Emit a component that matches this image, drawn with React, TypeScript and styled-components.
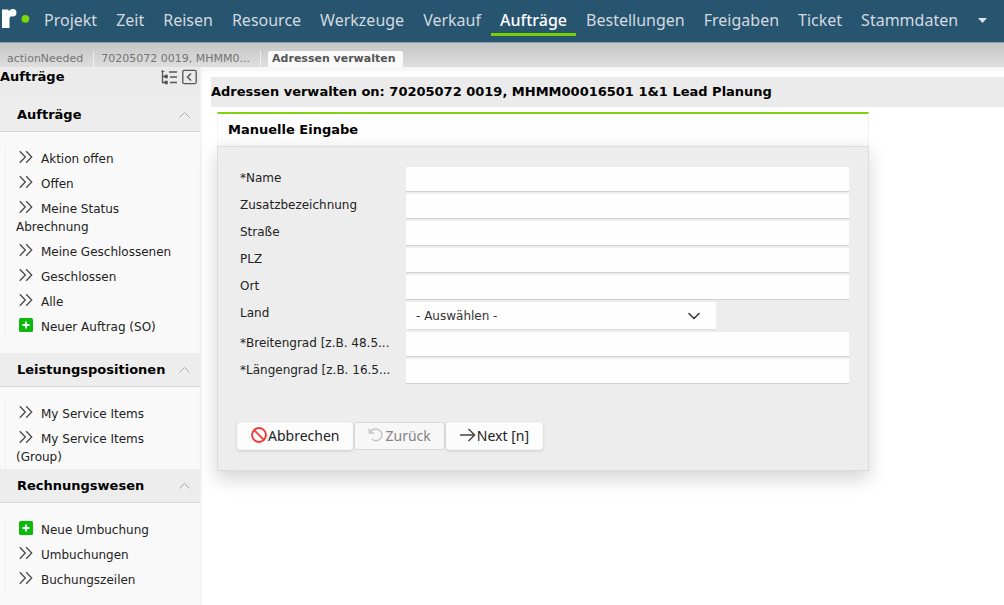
import React from "react";
import styled, { createGlobalStyle, css } from "styled-components";

const uiFont = `"DejaVu Sans", Verdana, sans-serif`;
const navFont = `"Noto Sans", "Open Sans", sans-serif`;

const GlobalStyle = createGlobalStyle`
  * { box-sizing: border-box; }
  body {
    margin: 0;
    background: #fff;
    color: #222;
    font: 12px/18px ${uiFont};
  }
`;

const Page = styled.div`
  display: flex;
  flex-direction: column;
  min-height: 100vh;
`;

const Header = styled.header`
  display: flex;
  align-items: flex-start;
  height: 43px;
  background: #27546f;
  border-bottom: 1px solid #8d9fab;
`;

const Logo = styled.a`
  display: block;
  width: 35px;
  height: 42px;
  flex: none;
`;

const Nav = styled.nav`
  display: flex;
  gap: 1px;
`;

const NavLink = styled.a<{ $active?: boolean }>`
  height: 36px;
  padding: 8px 9px 0;
  font: 16px/24px ${navFont};
  color: #d3dae0;
  text-decoration: none;
  white-space: nowrap;
  ${(p) =>
    p.$active &&
    css`
      color: #fff;
      font-weight: 500;
      border-bottom: 3px solid #7bd000;
    `}
`;

const MoreButton = styled.button`
  display: flex;
  align-items: center;
  height: 40px;
  padding: 0 9px 0 11px;
  border: 0;
  background: none;
`;

const TabBar = styled.nav`
  display: flex;
  align-items: flex-end;
  height: 24px;
  background: linear-gradient(#c6c6c6, #dedede);
`;

const Tab = styled.a<{ $active?: boolean }>`
  height: 16px;
  padding: 0 10px 0 7px;
  font: 11px/16px ${uiFont};
  color: #747474;
  text-decoration: none;
  white-space: nowrap;
  border-right: 1px solid #efefef;
  ${(p) =>
    p.$active &&
    css`
      margin-left: 7px;
      padding: 0 7px 0 4px;
      border: 0;
      border-radius: 2px 2px 0 0;
      background: #fafafa;
      color: #555;
      font-weight: bold;
    `}
`;

const Columns = styled.div`
  display: flex;
  flex: 1;
`;

const Sidebar = styled.aside`
  flex: none;
  width: 202px;
  background: #f9f9f9;
  border-right: 2px solid #f3f3f3;
`;

const SidebarTop = styled.div`
  display: flex;
  align-items: flex-start;
  height: 31px;
  padding: 1px 3px 0 0;
  background: #ebebeb;
`;

const SidebarTitle = styled.h1`
  flex: 1;
  margin: 0;
  font: bold 13px/18px ${uiFont};
  color: #000;
`;

const IconButton = styled.button`
  display: flex;
  padding: 1px 0 0;
  margin-left: 4px;
  border: 0;
  background: none;
`;

const SectionToggle = styled.button`
  display: flex;
  align-items: center;
  justify-content: space-between;
  width: 100%;
  height: 34px;
  padding: 1px 10px 0 17px;
  border: 0;
  border-bottom: 1px solid #d6d6d6;
  background: #ededed;
  font: bold 13px/18px ${uiFont};
  color: #000;
`;

const LinkList = styled.ul<{ $tight?: boolean }>`
  margin: 14px 0 ${(p) => (p.$tight ? 0 : 14)}px 5px;
  padding: 0 15px 0 10px;
  list-style: none;
  border-left: 1px solid #efefef;
`;

const LinkItem = styled.li`
  padding: 4px 0 3px;
`;

const SideLink = styled.a`
  color: #222;
  text-decoration: none;

  svg {
    width: 16px;
    height: 16px;
    margin: -4px 7px -4px 2px;
    vertical-align: 2px;
  }
`;

const Main = styled.main`
  flex: 1;
  min-width: 0;
  padding: 10px 0 30px 9px;
  background: linear-gradient(#f4f4f4, #fff 8px);
`;

const PageTitle = styled.h2`
  margin: 0;
  background: #ebebeb;
  font: bold 13px/30px ${uiFont};
  color: #000;
`;

const Card = styled.section`
  max-width: 652px;
  margin: 5px 20px 0 6px;
`;

const CardTitle = styled.h3`
  margin: 0;
  padding-left: 10px;
  border: 1px solid #f3f3f3;
  border-top: 2px solid #7fd40f;
  border-bottom: 0;
  background: linear-gradient(#fff 60%, #fafafa);
  font: bold 13px/32px ${uiFont};
  color: #000;
`;

const CardForm = styled.form`
  padding: 20px 19px 20px;
  border: 1px solid #dcdcdc;
  background: #ededed;
  box-shadow: 0 8px 18px rgba(0, 0, 0, 0.17);
`;

const Field = styled.div<{ $tall?: boolean }>`
  display: flex;
  align-items: flex-start;
  height: ${(p) => (p.$tall ? 30 : 27)}px;
  padding-left: 3px;
`;

const Label = styled.label`
  flex: none;
  width: 166px;
  font: 12px/23px ${uiFont};
  color: #222;
  white-space: nowrap;
`;

const TextInput = styled.input`
  flex: 1;
  min-width: 0;
  height: 25px;
  padding: 0 8px;
  border: 0;
  border-bottom: 1px solid #d0d0d0;
  background: #fefefe;
  font: 12px/18px ${uiFont};
`;

const SelectWrap = styled.div`
  display: flex;
  align-items: center;
  width: 310px;
  height: 28px;
  border-bottom: 1px solid #dedede;
  background: #fefefe;

  svg {
    flex: none;
    margin: 0 15px 0 -29px;
    pointer-events: none;
  }
`;

const Select = styled.select`
  flex: 1;
  height: 26px;
  padding: 0 30px 0 10px;
  border: 0;
  background: none;
  appearance: none;
  font: 12px/18px ${uiFont};
  color: #333;
`;

const Actions = styled.div`
  display: flex;
  gap: 1px;
  margin-top: 36px;
`;

const ActionButton = styled.button`
  display: flex;
  align-items: center;
  height: 28px;
  padding: 0 13px;
  border: 1px solid #f6f6f6;
  border-radius: 3px;
  background: #fcfcfc;
  box-shadow: 0 1px 3px rgba(0, 0, 0, 0.15);
  font: 14px/20px ${navFont};
  color: #222;

  svg {
    flex: none;
    width: 16px;
    height: 16px;
    margin: 0 1px 2px 0;
  }

  &:disabled {
    border-color: #d6d6d6;
    background: #f7f7f7;
    color: #848484;
    box-shadow: none;
  }
`;

const Chevrons = () => (
  <svg viewBox="0 0 16 16" fill="none" stroke="#4a4a4a" strokeWidth="1.3" aria-hidden="true">
    <path d="M1.8 2.2l5.5 5.8-5.5 5.8M8.2 2.2l5.5 5.8-5.5 5.8" />
  </svg>
);

const PlusBox = () => (
  <svg viewBox="0 0 16 16" aria-hidden="true">
    <rect x="1" y="1" width="14" height="14" rx="1.5" fill="#0cba0c" />
    <path d="M8 4.5v7M4.5 8h7" stroke="#fff" strokeWidth="1.8" />
  </svg>
);

const Caret = () => (
  <svg width="11" height="6" viewBox="0 0 11 6" fill="none" stroke="#aaa" aria-hidden="true">
    <path d="M.5 5.5l5-5 5 5" />
  </svg>
);

type Entry = { text: string; add?: boolean };

const sections: { title: string; tight?: boolean; entries: Entry[] }[] = [
  {
    title: "Aufträge",
    entries: [
      { text: "Aktion offen" },
      { text: "Offen" },
      { text: "Meine Status Abrechnung" },
      { text: "Meine Geschlossenen" },
      { text: "Geschlossen" },
      { text: "Alle" },
      { text: "Neuer Auftrag (SO)", add: true },
    ],
  },
  {
    title: "Leistungspositionen",
    tight: true,
    entries: [{ text: "My Service Items" }, { text: "My Service Items (Group)" }],
  },
  {
    title: "Rechnungswesen",
    entries: [
      { text: "Neue Umbuchung", add: true },
      { text: "Umbuchungen" },
      { text: "Buchungszeilen" },
    ],
  },
];

const navItems = [
  "Projekt", "Zeit", "Reisen", "Resource", "Werkzeuge", "Verkauf",
  "Aufträge", "Bestellungen", "Freigaben", "Ticket", "Stammdaten",
];

const TextField = ({ id, label }: { id: string; label: string }) => (
  <Field>
    <Label htmlFor={id}>{label}</Label>
    <TextInput id={id} type="text" />
  </Field>
);

export default function App() {
  return (
    <Page>
      <GlobalStyle />
      <Header>
        <Logo href="#" aria-label="Start">
          <svg width="35" height="42" viewBox="0 0 35 42" aria-hidden="true">
            <path d="M2 9.500h6.500v1.500l4-1.500v6.500c-2.200 0-3 1.200-3 3.500v8.500H2z" fill="#fff" />
            <circle cx="12.800" cy="12.700" r="3.700" fill="#fff" />
            <circle cx="25.400" cy="18.800" r="3.900" fill="#7bd800" />
          </svg>
        </Logo>
        <Nav>
          {navItems.map((name) => (
            <NavLink key={name} href="#" $active={name === "Aufträge"}>
              {name}
            </NavLink>
          ))}
        </Nav>
        <MoreButton type="button" aria-label="Mehr">
          <svg width="9" height="5" viewBox="0 0 9 5" aria-hidden="true">
            <path d="M0 0h9L4.500 5z" fill="#dfe5e9" />
          </svg>
        </MoreButton>
      </Header>
      <TabBar>
        <Tab href="#">actionNeeded</Tab>
        <Tab href="#">70205072 0019, MHMM0...</Tab>
        <Tab href="#" $active>Adressen verwalten</Tab>
      </TabBar>
      <Columns>
        <Sidebar>
          <SidebarTop>
            <SidebarTitle>Aufträge</SidebarTitle>
            <IconButton type="button" aria-label="Baumansicht">
              <svg width="18" height="16" viewBox="0 0 18 16" fill="none" stroke="#555" strokeWidth="1.3" aria-hidden="true">
                <path d="M2.500 1v12.500H6M2.500 7.500H6M9 3h8M10 8h7M10 13.500h7" />
                <path d="M1 2.500h4M5 6h2.500v3H5zM5 12h2.500v3H5z" fill="#555" strokeWidth=".6" />
              </svg>
            </IconButton>
            <IconButton type="button" aria-label="Seitenleiste einklappen">
              <svg width="15" height="16" viewBox="0 0 15 16" fill="none" stroke="#555" strokeWidth="1.300" aria-hidden="true">
                <rect x=".8" y="1.300" width="13.400" height="13.400" rx="1.500" />
                <path d="M9 4.500L5.500 8 9 11.500" strokeWidth="1.500" />
              </svg>
            </IconButton>
          </SidebarTop>
          {sections.map((section) => (
            <div key={section.title}>
              <SectionToggle type="button" aria-expanded="true">
                {section.title}
                <Caret />
              </SectionToggle>
              <LinkList $tight={section.tight}>
                {section.entries.map((entry) => (
                  <LinkItem key={entry.text}>
                    <SideLink href="#">
                      {entry.add ? <PlusBox /> : <Chevrons />}
                      {entry.text}
                    </SideLink>
                  </LinkItem>
                ))}
              </LinkList>
            </div>
          ))}
        </Sidebar>
        <Main>
          <PageTitle>Adressen verwalten on: 70205072 0019, MHMM00016501 1&amp;1 Lead Planung</PageTitle>
          <Card>
            <CardTitle>Manuelle Eingabe</CardTitle>
            <CardForm onSubmit={(e) => e.preventDefault()}>
              <TextField id="name" label="*Name" />
              <TextField id="extra" label="Zusatzbezeichnung" />
              <TextField id="street" label="Straße" />
              <TextField id="zip" label="PLZ" />
              <TextField id="city" label="Ort" />
              <Field $tall>
                <Label htmlFor="country">Land</Label>
                <SelectWrap>
                  <Select id="country">
                    <option>- Auswählen -</option>
                  </Select>
                  <svg width="14" height="8" viewBox="0 0 14 8" fill="none" stroke="#343a40" strokeWidth="1.600" strokeLinecap="round" strokeLinejoin="round" aria-hidden="true">
                    <path d="M2 1.500l5 5 5-5" />
                  </svg>
                </SelectWrap>
              </Field>
              <TextField id="lat" label="*Breitengrad [z.B. 48.5..." />
              <TextField id="lng" label="*Längengrad [z.B. 16.5..." />
              <Actions>
                <ActionButton type="button">
                  <svg viewBox="0 0 17 17" fill="none" stroke="#f23a3a" strokeWidth="2" aria-hidden="true">
                    <circle cx="8.500" cy="8.500" r="7.400" />
                    <path d="M3.300 3.300l10.400 10.400" />
                  </svg>
                  Abbrechen
                </ActionButton>
                <ActionButton type="button" disabled>
                  <svg viewBox="0 0 17 17" fill="none" stroke="#c6c6c6" strokeWidth="1.600" aria-hidden="true">
                    <path d="M1.500 1.500v5h5M1.800 6.300C3.200 3.500 5.600 2 8.600 2a6.300 6.300 0 1 1-4.300 11" />
                  </svg>
                  Zurück
                </ActionButton>
                <ActionButton type="submit">
                  <svg viewBox="0 0 15 15" fill="none" stroke="#444" strokeWidth="1.300" aria-hidden="true">
                    <path d="M0 7.500h13.500M8 1.800l5.700 5.700L8 13.200" />
                  </svg>
                  Next [n]
                </ActionButton>
              </Actions>
            </CardForm>
          </Card>
        </Main>
      </Columns>
    </Page>
  );
}
